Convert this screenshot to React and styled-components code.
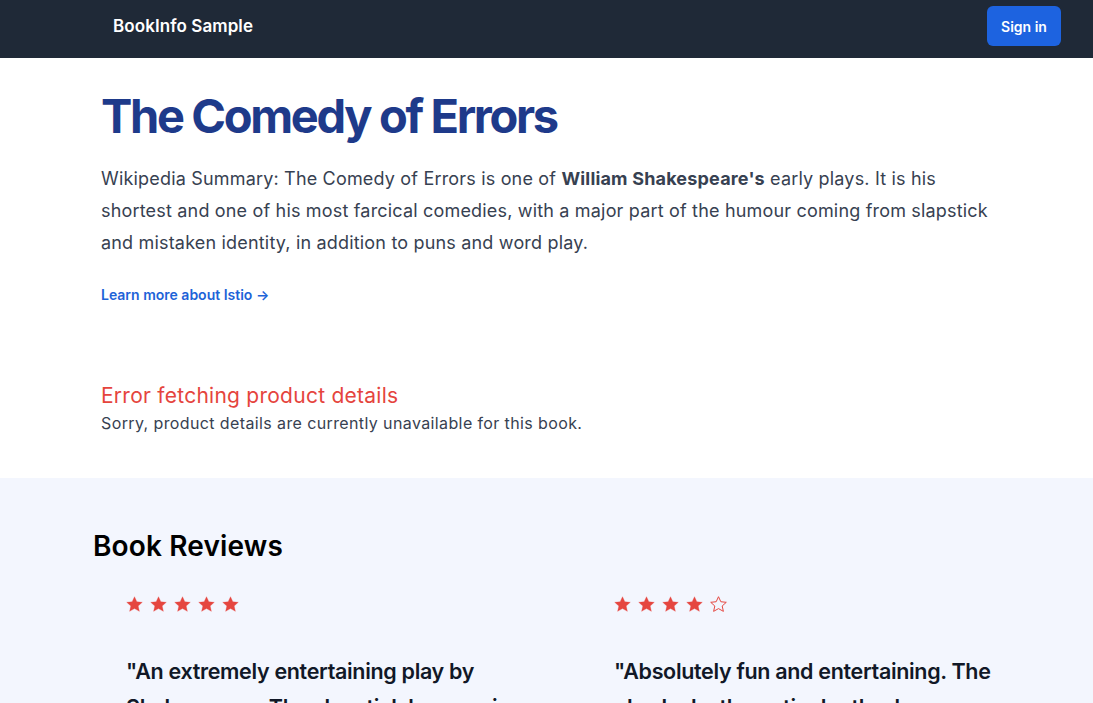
import React from 'react';
import styled, { createGlobalStyle } from 'styled-components';

const GlobalStyle = createGlobalStyle`
  html, body {
    margin: 0;
    padding: 0;
    background: #ffffff;
    font-family: Inter, "Noto Sans", "Liberation Sans", sans-serif;
    -webkit-font-smoothing: antialiased;
  }
  * { box-sizing: border-box; }
`;

// Header
const Header = styled.header`
  height: 58px;
  background: #1f2937;
  display: flex;
  align-items: flex-start;
  justify-content: space-between;
  padding: 6px 32px 0 113px;
`;

const Brand = styled.a`
  color: #ffffff;
  font-size: 17px;
  line-height: 40px;
  font-weight: 600;
  text-decoration: none;
  letter-spacing: 0.005em;
`;

const SignIn = styled.button`
  height: 40px;
  width: 74px;
  border: none;
  border-radius: 6px;
  background: #1d63e0;
  color: #ffffff;
  font-family: inherit;
  font-size: 14px;
  font-weight: 600;
  padding: 0;
  cursor: pointer;
`;

// Product section
const Product = styled.main`
  padding: 30px 100px 43px 101px;
`;

const Title = styled.h1`
  margin: 0;
  font-size: 47px;
  line-height: 56px;
  font-weight: 700;
  letter-spacing: -0.05em;
  color: #1e3a8a;
`;

const Summary = styled.p`
  margin: 19px 0 0;
  font-size: 18px;
  line-height: 32px;
  letter-spacing: 0.01em;
  color: #374151;

  strong { font-weight: 700; }
`;

const MoreLink = styled.a`
  display: inline-block;
  margin-top: 27px;
  font-size: 14px;
  font-weight: 600;
  color: #1d63d8;
  text-decoration: none;
`;

const ErrorBox = styled.div`
  margin-top: 78px;
`;

const ErrorTitle = styled.h3`
  margin: 0;
  font-size: 21px;
  line-height: 28px;
  font-weight: 400;
  letter-spacing: 0.012em;
  color: #e5443d;
`;

const ErrorText = styled.p`
  margin: 1px 0 0;
  font-size: 16px;
  line-height: 24px;
  letter-spacing: 0.024em;
  color: #374151;
`;

// Reviews section
const Reviews = styled.section`
  background: #f3f6fe;
  padding: 50px 93px 60px;
  min-height: 260px;
`;

const ReviewsTitle = styled.h2`
  margin: 0;
  font-size: 28px;
  line-height: 36px;
  font-weight: 600;
  letter-spacing: 0.005em;
  color: #000000;
`;

const ReviewGrid = styled.div`
  display: grid;
  grid-template-columns: 420px 420px;
  column-gap: 68px;
  padding: 31px 0 0 33px;
`;

const Review = styled.article`
  display: flex;
  flex-direction: column;
`;

const Stars = styled.div`
  display: flex;
  gap: 7px;
  height: 18px;
  align-items: center;
`;

const Quote = styled.blockquote`
  margin: 40px 0 0;
  font-size: 21.5px;
  line-height: 36px;
  font-weight: 600;
  letter-spacing: -0.015em;
  color: #111827;
`;

const Reviewer = styled.p`
  margin: 16px 0 0;
  font-size: 15px;
  color: #4b5563;
`;

const STAR = 'M12 1l3.3 7.1 7.7.8-5.8 5.2 1.7 7.6L12 17.8l-6.9 3.9 1.7-7.6L1 8.9l7.7-.8z';

const Star = ({ filled }) => (
  <svg width="17" height="17" viewBox="0 0 24 24">
    <path
      d={STAR}
      fill={filled ? '#e5463f' : 'none'}
      stroke="#e5463f"
      strokeWidth={filled ? 0.4 : 1.4}
      strokeLinejoin="miter"
    />
  </svg>
);

const reviews = [
  {
    rating: 5,
    text: '"An extremely entertaining play by Shakespeare. The slapstick humour is refreshing!"',
    by: 'Reviewer1',
  },
  {
    rating: 4,
    text: '"Absolutely fun and entertaining. The play lacks thematic depth when compared to other plays by Shakespeare."',
    by: 'Reviewer2',
  },
];

export default function App() {
  return (
    <>
      <GlobalStyle />
      <Header>
        <Brand href="#">BookInfo Sample</Brand>
        <SignIn>Sign in</SignIn>
      </Header>

      <Product>
        <Title>The Comedy of Errors</Title>
        <Summary>
          Wikipedia Summary: The Comedy of Errors is one of <strong>William Shakespeare's</strong> early
          plays. It is his shortest and one of his most farcical comedies, with a major part of the
          humour coming from slapstick and mistaken identity, in addition to puns and word play.
        </Summary>
        <MoreLink href="#">Learn more about Istio →</MoreLink>

        <ErrorBox>
          <ErrorTitle>Error fetching product details</ErrorTitle>
          <ErrorText>Sorry, product details are currently unavailable for this book.</ErrorText>
        </ErrorBox>
      </Product>

      <Reviews>
        <ReviewsTitle>Book Reviews</ReviewsTitle>
        <ReviewGrid>
          {reviews.map((r) => (
            <Review key={r.by}>
              <Stars>
                {[1, 2, 3, 4, 5].map((n) => (
                  <Star key={n} filled={n <= r.rating} />
                ))}
              </Stars>
              <Quote>{r.text}</Quote>
              <Reviewer>— {r.by}</Reviewer>
            </Review>
          ))}
        </ReviewGrid>
      </Reviews>
    </>
  );
}
